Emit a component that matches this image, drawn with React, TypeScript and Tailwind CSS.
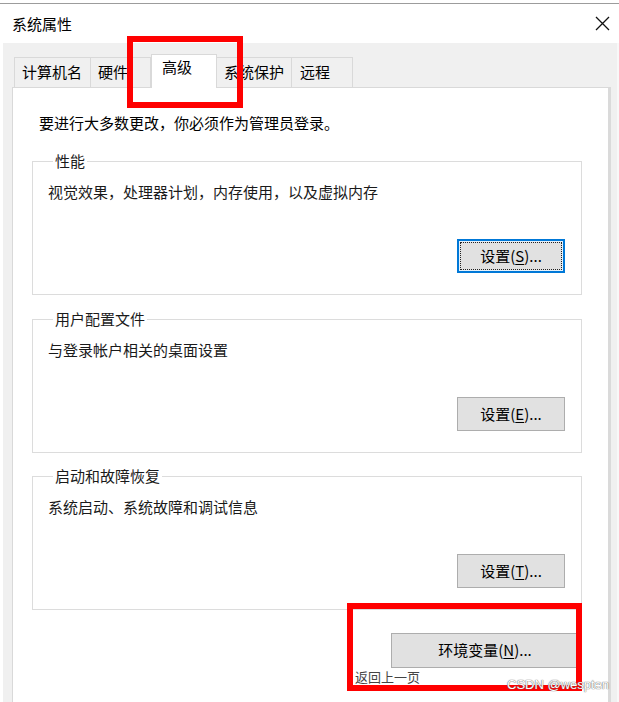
import React from "react";

const cjk = "font-['Noto_Sans_CJK_SC','Noto_Sans',sans-serif]";

function Tab({ label, width, pl, selected }: { label: string; width: string; pl: string; selected?: boolean }) {
  if (selected) {
    return (
      <div className={`${width} ${pl} h-[34px] -mb-px z-10 bg-white border border-b-0 border-[#d9d9d9] pt-[2px] leading-[20px]`}>
        {label}
      </div>
    );
  }
  return (
    <div className={`${width} ${pl} h-[30px] bg-[#f0f0f0] border border-b-0 border-l-0 first:border-l border-[#d9d9d9] pt-[4px] leading-[20px]`}>
      {label}
    </div>
  );
}

function SettingsButton({ hotkey, focused }: { hotkey: string; focused?: boolean }) {
  const label = (
    <span>
      设置(<span className="underline underline-offset-2">{hotkey}</span>)...
    </span>
  );
  if (focused) {
    return (
      <div className="w-[108px] h-[34px] border-2 border-[#0078d7] bg-[#e5f1fb] p-px">
        <div className="h-full border border-dotted border-[#222] bg-[#e1e1e1] flex items-center justify-center text-[15px]">
          {label}
        </div>
      </div>
    );
  }
  return (
    <div className="w-[108px] h-[34px] border border-[#adadad] bg-[#e1e1e1] flex items-center justify-center text-[15px]">
      {label}
    </div>
  );
}

function Group({
  title,
  text,
  hotkey,
  focused,
  className = "",
}: {
  title: string;
  text: string;
  hotkey: string;
  focused?: boolean;
  className?: string;
}) {
  return (
    <fieldset className={`border border-[#dcdcdc] pl-[15px] pr-[16px] pt-[11px] pb-[21px] ${className}`}>
      <legend className="ml-[5px] px-[2px] leading-[20px] text-[15px] text-[#1a1a1a]">{title}</legend>
      <div className="leading-[20px] text-[15px] text-[#1a1a1a]">{text}</div>
      <div className="flex justify-end mt-[37px]">
        <SettingsButton hotkey={hotkey} focused={focused} />
      </div>
    </fieldset>
  );
}

export default function App() {
  return (
    <div className={`relative w-[619px] h-[702px] overflow-hidden bg-white text-black ${cjk}`}>
      {/* cut-off strip above the window */}
      <div className="h-[4px] border-b border-[#9c9c9c]" />

      {/* title bar */}
      <div className="h-[39px] flex items-center justify-between pl-[12px] pr-[9px]">
        <span className="text-[15px] leading-[20px]">系统属性</span>
        <svg width="15" height="15" viewBox="0 0 15 15" className="text-[#111]">
          <path d="M1 1 L14 14 M14 1 L1 14" stroke="currentColor" strokeWidth="1.3" fill="none" />
        </svg>
      </div>

      {/* dialog body */}
      <div className="h-[659px] bg-[#f0f0f0] ml-[3px] pl-[9px] pr-[6px] flex flex-col border-r-2 border-[#f8f8f8]">
        <div className="h-[44px] flex items-end pl-[2px] text-[15px]">
          <Tab label="计算机名" width="w-[77px]" pl="pl-[7px]" />
          <Tab label="硬件" width="w-[60px]" pl="pl-[7px]" />
          <Tab label="高级" width="w-[66px]" pl="pl-[10px]" selected />
          <Tab label="系统保护" width="w-[75px]" pl="pl-[7px]" />
          <Tab label="远程" width="w-[61px]" pl="pl-[8px]" />
        </div>

        <div className="flex-1 bg-white border border-b-0 border-[#d9d9d9] border-r-[3px] border-r-[#dadada] pl-[19px] pr-[26px] pt-[25px]">
          <div className="pl-[7px] text-[15px] leading-[20px]">要进行大多数更改，你必须作为管理员登录。</div>

          <Group
            className="mt-[18px]"
            title="性能"
            text="视觉效果，处理器计划，内存使用，以及虚拟内存"
            hotkey="S"
            focused
          />
          <Group className="mt-[14px]" title="用户配置文件" text="与登录帐户相关的桌面设置" hotkey="E" />
          <Group className="mt-[13px]" title="启动和故障恢复" text="系统启动、系统故障和调试信息" hotkey="T" />

          <div className="flex justify-end mt-[23px] pr-[3px]">
            <div className="w-[188px] h-[35px] border border-[#adadad] bg-[#e1e1e1] flex items-center justify-center text-[15px]">
              <span>
                环境变量(<span className="underline underline-offset-2">N</span>)...
              </span>
            </div>
          </div>
          <div className="ml-[323px] mt-px text-[13px] leading-[16px] text-[#444]">返回上一页</div>
        </div>
      </div>

      {/* red highlight boxes */}
      <div className="absolute left-[127px] top-[36px] w-[116px] h-[72px] border-[6px] border-[#ff0000] z-20" />
      <div className="absolute left-[347px] top-[603px] w-[235px] h-[88px] border-[6px] border-[#ff0000] z-20" />

      {/* watermark */}
      <div className="absolute left-[507px] top-[677px] z-30 font-['Liberation_Sans',sans-serif] text-[13px] leading-[16px] text-white [text-shadow:0_0_1px_#666,0_0_1px_#666]">
        CSDN @wespten
      </div>
    </div>
  );
}
